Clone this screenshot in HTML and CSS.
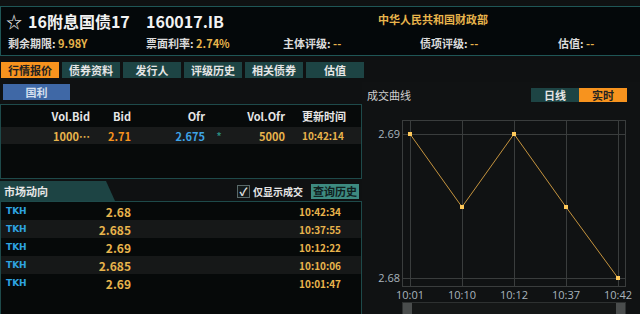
FILE: index.html
```html
<!DOCTYPE html>
<html lang="zh-CN">
<head>
  <meta charset="UTF-8">
  <title>16附息国债17</title>
  <link rel="stylesheet" href="styles.css">
</head>
<body>
  <div class="header">
    <div class="title-row">
      <span class="star">☆</span>
      <span class="bond-name">16附息国债17</span>
      <span class="bond-code">160017.IB</span>
      <span class="issuer">中华人民共和国财政部</span>
    </div>
    <div class="info-row">
      <div>剩余期限: <span class="val">9.98Y</span></div>
      <div>票面利率: <span class="val">2.74%</span></div>
      <div>主体评级: <span class="val">--</span></div>
      <div>债项评级: <span class="val">--</span></div>
      <div>估值: <span class="val">--</span></div>
    </div>
  </div>

  <div class="tabs">
    <div class="tab active">行情报价</div>
    <div class="tab">债券资料</div>
    <div class="tab">发行人</div>
    <div class="tab">评级历史</div>
    <div class="tab">相关债券</div>
    <div class="tab">估值</div>
  </div>

  <div class="main">
    <div class="left">
      <div class="subbar"><div class="broker">国利</div></div>

      <div class="quote">
        <div class="q-row q-head">
          <span class="c1">Vol.Bid</span>
          <span class="c2">Bid</span>
          <span class="c3">Ofr</span>
          <span class="c4"></span>
          <span class="c5">Vol.Ofr</span>
          <span class="c6">更新时间</span>
        </div>
        <div class="q-row q-data">
          <span class="c1 gold">1000…</span>
          <span class="c2 orange">2.71</span>
          <span class="c3 blue">2.675</span>
          <span class="c4 mark">*</span>
          <span class="c5 gold">5000</span>
          <span class="c6 gold time">10:42:14</span>
        </div>
      </div>

      <div class="market-head">
        <div class="market-tab">市场动向</div>
        <label class="only-deal"><span class="check">✓</span>仅显示成交</label>
        <div class="history-btn">查询历史</div>
      </div>

      <div class="deals">
        <div class="deal"><span class="src">TKH</span><span class="price">2.68</span><span class="dtime">10:42:34</span></div>
        <div class="deal"><span class="src">TKH</span><span class="price">2.685</span><span class="dtime">10:37:55</span></div>
        <div class="deal"><span class="src">TKH</span><span class="price">2.69</span><span class="dtime">10:12:22</span></div>
        <div class="deal"><span class="src">TKH</span><span class="price">2.685</span><span class="dtime">10:10:06</span></div>
        <div class="deal"><span class="src">TKH</span><span class="price">2.69</span><span class="dtime">10:01:47</span></div>
      </div>
    </div>

    <div class="right">
      <div class="chart-head">
        <span class="chart-title">成交曲线</span>
        <div class="modes">
          <div class="mode">日线</div>
          <div class="mode on">实时</div>
        </div>
      </div>
      <svg class="chart" width="278" height="210" viewBox="0 0 278 210">
        <rect x="40.5" y="16.5" width="223" height="166" fill="none" stroke="#3a3d3d"/>
        <g stroke="#3a3d3d">
          <line x1="48.5" y1="16" x2="48.5" y2="182"/>
          <line x1="100.5" y1="16" x2="100.5" y2="182"/>
          <line x1="152.5" y1="16" x2="152.5" y2="182"/>
          <line x1="204.5" y1="16" x2="204.5" y2="182"/>
          <line x1="256.5" y1="16" x2="256.5" y2="182"/>
          <line x1="40" y1="30.5" x2="263" y2="30.5"/>
          <line x1="40" y1="174.5" x2="263" y2="174.5"/>
        </g>
        <g class="axis" fill="#a9b4bd" font-size="11">
          <text x="38" y="34" text-anchor="end">2.69</text>
          <text x="38" y="178" text-anchor="end">2.68</text>
          <text x="48" y="195" text-anchor="middle">10:01</text>
          <text x="100" y="195" text-anchor="middle">10:10</text>
          <text x="152" y="195" text-anchor="middle">10:12</text>
          <text x="204" y="195" text-anchor="middle">10:37</text>
          <text x="256" y="195" text-anchor="middle">10:42</text>
        </g>
        <polyline points="48,30 100,103 152,30 204,103 256,174" fill="none" stroke="#c4933e" stroke-width="1"/>
        <g fill="#ffc95a">
          <rect x="46" y="28" width="4" height="4"/>
          <rect x="98" y="101" width="4" height="4"/>
          <rect x="150" y="28" width="4" height="4"/>
          <rect x="202" y="101" width="4" height="4"/>
          <rect x="254" y="172" width="4" height="4"/>
        </g>
        <rect x="40.5" y="198.5" width="223" height="12" fill="#151717" stroke="#2e3131"/>
        <rect x="41" y="199" width="9" height="11" fill="#4a4d4d"/>
        <rect x="254" y="199" width="9" height="11" fill="#4a4d4d"/>
      </svg>
    </div>
  </div>
</body>
</html>
```

FILE: styles.css
```css
body {
  margin: 0;
  width: 640px;
  height: 314px;
  overflow: hidden;
  background: #0f1112;
  color: #e6e6e6;
  font-family: "Noto Sans CJK SC", "Liberation Sans", sans-serif;
  font-weight: bold;
  font-size: 11px;
}
.header {
  margin-top: 6px;
  height: 48px;
  border-top: 1px solid #1f5656;
  border-bottom: 1px solid #1f5656;
  border-left: 1px solid #1f5656;
  background: #04080a;
}
.title-row {
  height: 28px;
  display: flex;
  align-items: center;
}
.star {
  width: 22px;
  padding-left: 5px;
  font-size: 16px;
  font-weight: normal;
  color: #eee;
}
.bond-name {
  width: 118px;
  font-size: 16px;
  color: #f2f2f2;
}
.bond-code {
  width: 232px;
  font-size: 16px;
  color: #f2f2f2;
}
.issuer {
  color: #e8b44c;
  font-size: 11px;
  margin-top: -5px;
}
.info-row {
  display: grid;
  grid-template-columns: 138px 137px 137px 138px 1fr;
  padding-left: 7px;
  color: #dcdcdc;
  line-height: 16px;
}
.val {
  color: #e8b44c;
}
.tabs {
  display: flex;
  gap: 3px;
  margin-top: 6px;
  padding-left: 1px;
}
.tab {
  width: 58px;
  height: 16px;
  line-height: 16px;
  text-align: center;
  background: #1d4444;
  color: #e6e6e6;
}
.tab.active {
  background: #f7931e;
  color: #222;
}
.main {
  display: flex;
  margin-top: 4px;
}
.left {
  width: 362px;
}
.subbar {
  height: 22px;
  padding: 2px 0 0 3px;
  box-sizing: border-box;
}
.broker {
  width: 67px;
  height: 16px;
  line-height: 16px;
  text-align: center;
  background: #3f68a6;
  color: #d6e0f0;
}
.quote {
  height: 73px;
  border: 1px solid #1e4a4a;
  background: #070a0a;
}
.q-row {
  display: grid;
  grid-template-columns: 89px 41px 74px 28px 52px 1fr;
  align-items: center;
}
.q-row span {
  text-align: right;
}
.q-head {
  height: 22px;
  color: #e6e6e6;
}
.q-data {
  height: 17px;
  background: #191b1b;
}
.q-row .c4 {
  text-align: center;
}
.q-row .c6 {
  text-align: left;
  padding-left: 17px;
}
.gold {
  color: #e8b44c;
}
.orange {
  color: #f7931e;
}
.blue {
  color: #3ea3e6;
}
.mark {
  color: #2a8a7e;
  font-size: 10px;
}
.time {
  font-size: 10px;
}
.market-head {
  height: 20px;
  margin-top: 2px;
  display: flex;
  align-items: center;
}
.market-tab {
  width: 101px;
  height: 20px;
  line-height: 20px;
  padding-left: 4px;
  padding-right: 10px;
  background: #1d4444;
  color: #e6e6e6;
  clip-path: polygon(0 0, 106px 0, 115px 100%, 0 100%);
}
.only-deal {
  margin-left: 122px;
  display: flex;
  align-items: center;
  gap: 3px;
  white-space: nowrap;
  font-size: 10px;
  color: #e6e6e6;
}
.check {
  width: 11px;
  height: 11px;
  border: 1px solid #5a6a6a;
  background: #141a1a;
  font-size: 11px;
  line-height: 11px;
  text-align: center;
  color: #e6e6e6;
}
.history-btn {
  margin-left: auto;
  margin-right: 3px;
  width: 48px;
  height: 15px;
  line-height: 15px;
  text-align: center;
  background: #3d8a80;
  color: #10201e;
  white-space: nowrap;
}
.deals {
  height: 114px;
  border: 1px solid #1e4a4a;
  border-bottom: none;
  background: #060909;
}
.deal {
  height: 18px;
  display: grid;
  grid-template-columns: 40px 90px 1fr;
  align-items: center;
  color: #e8b44c;
}
.deal:nth-child(even) {
  background: #161818;
}
.src {
  padding-left: 5px;
  font-size: 9px;
  color: #2ea4e0;
  font-family: "DejaVu Sans", sans-serif;
}
.price {
  text-align: right;
  font-size: 12px;
}
.dtime {
  text-align: right;
  padding-right: 20px;
  font-size: 10px;
}
.right {
  flex: 1;
  background: #101213;
}
.chart-head {
  height: 22px;
  box-sizing: border-box;
  padding: 3px 0 0 5px;
  display: flex;
  align-items: center;
}
.chart-title {
  font-weight: normal;
  color: #d0d0d0;
  width: 164px;
}
.modes {
  display: flex;
}
.mode {
  width: 48px;
  height: 14px;
  line-height: 14px;
  text-align: center;
  background: #1d4444;
  color: #e6e6e6;
}
.mode.on {
  background: #f7931e;
  color: #222;
}
.chart {
  display: block;
}
.axis {
  font-family: "Open Sans", sans-serif;
  font-weight: normal;
}
```
